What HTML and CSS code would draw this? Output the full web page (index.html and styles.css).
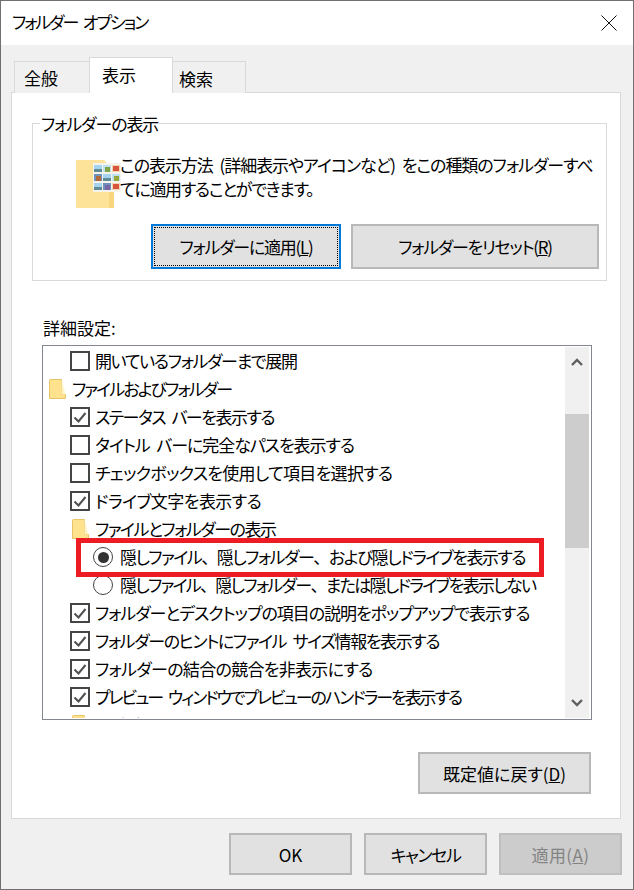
FILE: index.html
```html
<!DOCTYPE html>
<html lang="ja">
<head>
<meta charset="utf-8">
<title>フォルダー オプション</title>
<link rel="stylesheet" href="styles.css">
</head>
<body>
<div class="window">
  <header class="titlebar">
    <span class="title ls-21">フォルダー オプション</span>
    <svg class="close" viewBox="0 0 16 16"><path d="M0.5 0.5L15.5 15.5M15.5 0.5L0.5 15.5"/></svg>
  </header>
  <main class="main">
    <nav class="tabs">
      <span class="tab first">全般</span>
      <span class="tab selected">表示</span>
      <span class="tab last">検索</span>
    </nav>
    <section class="panel">
      <fieldset class="group">
        <legend class="legend ls-11">フォルダーの表示</legend>
        <div class="desc-row">
          <svg class="view-icon" viewBox="0 0 46 48">
            <path d="M0 1a1 1 0 0 1 1-1h27l3 3h7v45H1a1 1 0 0 1-1-1z" fill="#fde39a"/>
            <path d="M33 20h5v28h-5z" fill="#f7d67e"/>
            <rect x="17" y="3" width="28" height="29" fill="#f6f3ec"/>
            <g>
              <rect x="18" y="5" width="8" height="7" fill="#a6d3ee"/><rect x="18" y="9" width="8" height="3" fill="#5f8c94"/>
              <rect x="27" y="5" width="8" height="7" fill="#bfe0f0"/><rect x="29" y="7" width="5" height="5" fill="#7fa445"/>
              <rect x="36" y="5" width="8" height="7" fill="#efd6b4"/><rect x="37" y="6" width="6" height="5" fill="#d9553a"/>
              <rect x="18" y="14" width="8" height="7" fill="#6d92bd"/><rect x="20" y="16" width="5" height="5" fill="#b0683c"/>
              <rect x="27" y="14" width="8" height="7" fill="#a6d3ee"/><rect x="27" y="18" width="8" height="3" fill="#5f8c94"/>
              <rect x="36" y="14" width="8" height="7" fill="#bfe0f0"/><rect x="38" y="16" width="5" height="5" fill="#98a838"/>
              <rect x="18" y="23" width="8" height="7" fill="#a6d3ee"/><rect x="18" y="27" width="8" height="3" fill="#5f8c94"/>
              <rect x="27" y="23" width="8" height="7" fill="#6d92bd"/><rect x="29" y="25" width="5" height="5" fill="#7a68a6"/>
              <rect x="36" y="23" width="8" height="7" fill="#efd6b4"/><rect x="37" y="24" width="6" height="5" fill="#d9553a"/>
            </g>
          </svg>
          <p class="desc"><span class="line ls-105">この表示方法 (詳細表示やアイコンなど) をこの種類のフォルダーすべ</span><span class="line ls-13">てに適用することができます。</span></p>
        </div>
        <div class="group-buttons">
          <button class="btn focused"><span class="focus-ring ls-125">フォルダーに適用(<u>L</u>)</span></button>
          <button class="btn reset ls-13">フォルダーをリセット(<u>R</u>)</button>
        </div>
      </fieldset>

      <div class="list-label">詳細設定:</div>
      <div class="list">
        <div class="rows">
          <div class="row lv1 ls-135"><span class="check"></span>開いているフォルダーまで展開</div>
          <div class="row lv0 ls-19"><svg class="folder" viewBox="0 0 17 20"><path d="M.5 1.5a1 1 0 0 1 1-1h11v15h4v4H.5z" fill="#fee28e" stroke="#e9c466"/><path d="M12.5 .5l0 15 4 0z" fill="#fff3c4"/></svg>ファイルおよびフォルダー</div>
          <div class="row lv1 ls-15"><span class="check on"><svg viewBox="0 0 16 16"><path d="M2.5 8.5L6.5 12.5L13.5 4"/></svg></span>ステータス バーを表示する</div>
          <div class="row lv1 ls-107"><span class="check"></span>タイトル バーに完全なパスを表示する</div>
          <div class="row lv1 ls-07"><span class="check"></span>チェックボックスを使用して項目を選択する</div>
          <div class="row lv1 ls-055"><span class="check on"><svg viewBox="0 0 16 16"><path d="M2.5 8.5L6.5 12.5L13.5 4"/></svg></span>ドライブ文字を表示する</div>
          <div class="row lv1f ls-15"><svg class="folder" viewBox="0 0 17 20"><path d="M.5 1.5a1 1 0 0 1 1-1h11v15h4v4H.5z" fill="#fee28e" stroke="#e9c466"/><path d="M12.5 .5l0 15 4 0z" fill="#fff3c4"/></svg>ファイルとフォルダーの表示</div>
          <div class="row lv2 ls-15"><span class="radio on"></span><span>隠しファイル<span class="np">、</span>隠しフォルダー<span class="np">、</span>および隠しドライブを表示する</span></div>
          <div class="row lv2 ls-17"><span class="radio"></span><span>隠しファイル<span class="np">、</span>隠しフォルダー<span class="np">、</span>または隠しドライブを表示しない</span></div>
          <div class="row lv1 ls-106"><span class="check on"><svg viewBox="0 0 16 16"><path d="M2.5 8.5L6.5 12.5L13.5 4"/></svg></span>フォルダーとデスクトップの項目の説明をポップアップで表示する</div>
          <div class="row lv1 ls-14"><span class="check on"><svg viewBox="0 0 16 16"><path d="M2.5 8.5L6.5 12.5L13.5 4"/></svg></span>フォルダーのヒントにファイル サイズ情報を表示する</div>
          <div class="row lv1 ls-07"><span class="check on"><svg viewBox="0 0 16 16"><path d="M2.5 8.5L6.5 12.5L13.5 4"/></svg></span>フォルダーの結合の競合を非表示にする</div>
          <div class="row lv1 ls-205"><span class="check on"><svg viewBox="0 0 16 16"><path d="M2.5 8.5L6.5 12.5L13.5 4"/></svg></span>プレビュー ウィンドウでプレビューのハンドラーを表示する</div>
          <div class="row lv1f ls-15"><svg class="folder" viewBox="0 0 17 20"><path d="M.5 1.5a1 1 0 0 1 1-1h11v15h4v4H.5z" fill="#fee28e" stroke="#e9c466"/><path d="M12.5 .5l0 15 4 0z" fill="#fff3c4"/></svg>ナビゲーション ウィンドウ</div>
        </div>
        <div class="scrollbar">
          <svg class="arrow" viewBox="0 0 12 8"><path d="M1 7L6 2L11 7"/></svg>
          <div class="track"><div class="thumb"></div></div>
          <svg class="arrow" viewBox="0 0 12 8"><path d="M1 1L6 6L11 1"/></svg>
        </div>
        <div class="highlight"></div>
      </div>
      <div class="restore-row">
        <button class="btn restore">既定値に戻す(<u>D</u>)</button>
      </div>
    </section>
    <footer class="footer">
      <button class="btn action">OK</button>
      <button class="btn action ls-14">キャンセル</button>
      <button class="btn action disabled ls-up">適用(<u>A</u>)</button>
    </footer>
  </main>
</div>
</body>
</html>
```

FILE: styles.css
```css
* { box-sizing: border-box; }
html, body { margin: 0; padding: 0; }
body {
  width: 634px;
  height: 890px;
  overflow: hidden;
  font-family: "Noto Sans CJK JP", "Noto Sans", sans-serif;
  font-size: 17px;
  font-feature-settings: "palt";
  word-spacing: 4px;
  color: #000;
}
.ls-up { letter-spacing: 0.4px; }
.ls-055 { letter-spacing: -0.55px; }
.ls-07 { letter-spacing: -0.7px; }
.ls-105 { letter-spacing: -1.05px; }
.ls-106 { letter-spacing: -1.06px; }
.ls-107 { letter-spacing: -1.07px; }
.ls-11 { letter-spacing: -1.1px; }
.ls-125 { letter-spacing: -1.25px; }
.ls-13 { letter-spacing: -1.3px; }
.ls-135 { letter-spacing: -1.35px; }
.ls-14 { letter-spacing: -1.4px; }
.ls-15 { letter-spacing: -1.5px; }
.ls-17 { letter-spacing: -1.7px; }
.ls-19 { letter-spacing: -1.9px; }
.ls-205 { letter-spacing: -2.05px; }
.ls-21 { letter-spacing: -2.1px; }
.np { font-feature-settings: normal; }

.window {
  width: 634px;
  height: 890px;
  border: 1px solid #707070;
  display: flex;
  flex-direction: column;
  background: #f0f0f0;
}
.titlebar {
  height: 44px;
  flex: none;
  background: #fff;
  display: flex;
  align-items: center;
  justify-content: space-between;
  padding: 0 16px 2px 11px;
}
.title { line-height: 24px; }
.close { width: 16px; height: 16px; margin-top: 2px; }
.close path { stroke: #111; stroke-width: 1; fill: none; }

.main { flex: 1; padding: 0 12px 0 10px; display: flex; flex-direction: column; }
.tabs { display: flex; align-items: flex-end; height: 48px; padding-left: 3px; margin-bottom: -1px; position: relative; z-index: 1; }
.tab {
  height: 32px;
  border: 1px solid #d9d9d9;
  border-bottom: 0;
  margin-right: -1px;
  line-height: 32px;
  background: #f0f0f0;
  color: #000;
}
.tab.first { width: 76px; padding-left: 9px; }
.tab.selected {
  width: 84px;
  height: 36px;
  padding-left: 12px;
  background: #fff;
  line-height: 34px;
  position: relative;
  z-index: 2;
}
.tab.last { width: 74px; padding-left: 6px; line-height: 34px; }
.panel {
  height: 727px;
  flex: none;
  background: #fff;
  border: 1px solid #d9d9d9;
  padding: 18px 13px 0 20px;
}
.group {
  margin: 0;
  padding: 18px 7px 0 43px;
  height: 170px;
  width: 575px;
  border: 1px solid #d9d9d9;
  min-width: 0;
}
.legend { padding: 0 1px; margin-left: -36px; line-height: 26px; height: 24px; }
.desc-row { display: flex; height: 55px; }
.view-icon { width: 46px; height: 48px; flex: none; margin-top: 7px; margin-right: -2px; }
.desc { margin: 0; line-height: 24px; white-space: nowrap; }
.line { display: block; }
.group-buttons { display: flex; justify-content: flex-end; gap: 10px; margin-top: 16px; }

.btn {
  font: inherit;
  font-feature-settings: inherit;
  word-spacing: inherit;
  color: #000;
  background: #e1e1e1;
  border: 2px solid #b8b8b8;
  padding: 0;
  display: flex;
  align-items: center;
  justify-content: center;
}
.btn.focused { width: 190px; height: 45px; border: 2px solid #0078d7; padding: 1px; }
.focus-ring { width: 100%; height: 100%; border: 1px dotted #000; display: flex; align-items: center; justify-content: center; }
.btn.reset { width: 248px; height: 45px; }

.list-label { margin: 35px 0 5px 11px; line-height: 24px; }
.list {
  position: relative;
  margin-left: 10px;
  width: 550px;
  height: 375px;
  border: 1px solid #828790;
  padding: 1px 2px 1px 1px;
  display: flex;
  background: #fff;
}
.rows { flex: 1; overflow: hidden; height: 371px; }
.row { height: 28px; padding-bottom: 2px; display: flex; align-items: center; white-space: nowrap; }
.lv0 { padding-left: 5px; }
.lv1 { padding-left: 26px; }
.lv1f { padding-left: 28px; }
.lv2 { padding-left: 49px; }
.check {
  width: 20px; height: 20px; flex: none;
  border: 2px solid #454545;
  margin: 2px 5px 0 0;
  display: flex;
}
.check svg { width: 16px; height: 16px; }
.check path { fill: none; stroke: #505050; stroke-width: 2; }
.radio {
  width: 20px; height: 20px; flex: none;
  border: 1px solid #444;
  border-radius: 50%;
  margin: 2px 7px 0 0;
  display: flex;
  align-items: center;
  justify-content: center;
}
.radio.on::after { content: ""; width: 11px; height: 11px; border-radius: 50%; background: #333; }
.folder { width: 17px; height: 20px; flex: none; margin: 2px 6px 0 0; }

.scrollbar { width: 24px; flex: none; height: 371px; background: #f0f0f0; display: flex; flex-direction: column; align-items: center; }
.arrow { width: 12px; height: 8px; flex: none; margin: 11px 0; }
.arrow path { fill: none; stroke: #606060; stroke-width: 2.4; }
.track { flex: 1; padding-top: 37px; width: 100%; margin-top: 0; }
.thumb { height: 134px; background: #cdcdcd; }

.highlight {
  position: absolute;
  left: 33px;
  top: 192px;
  width: 468px;
  height: 39px;
  border: 5px solid #ed1c24;
  pointer-events: none;
}
.restore-row { display: flex; justify-content: flex-end; margin: 32px 16px 0 0; }
.btn.restore { width: 173px; height: 42px; }

.footer { display: flex; justify-content: flex-end; gap: 12px; margin: 14px -1px 0 0; }
.btn.action { width: 123px; height: 42px; }
.btn.disabled { background: #ccc; border-color: #bfbfbf; color: #838383; }
```
